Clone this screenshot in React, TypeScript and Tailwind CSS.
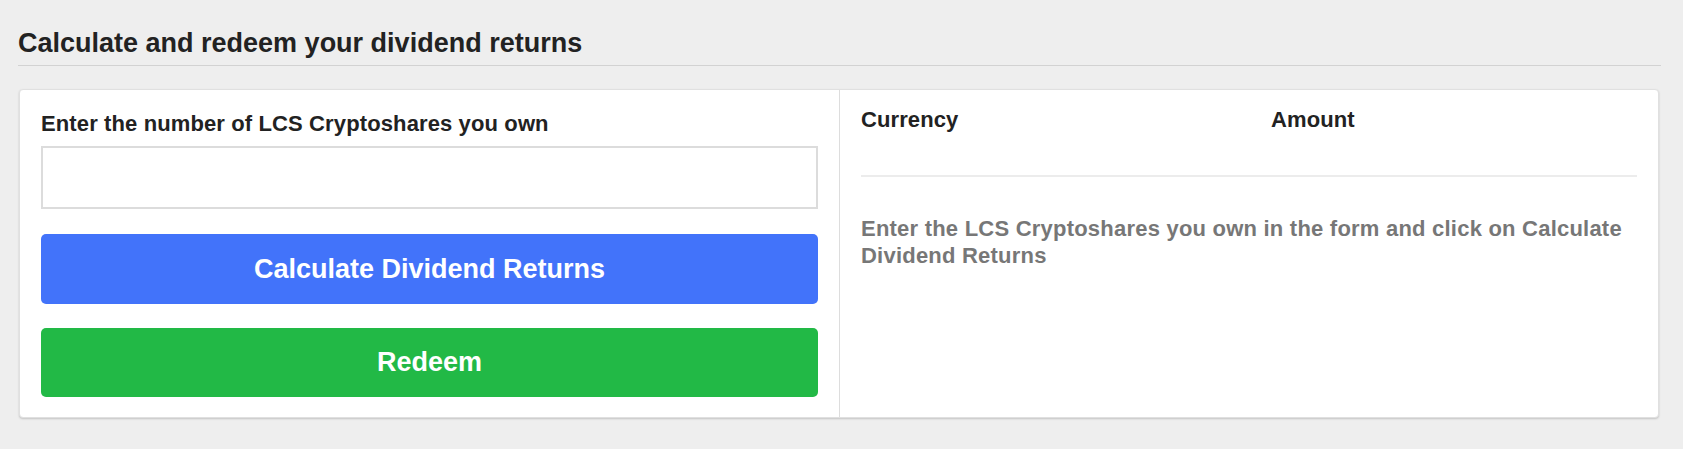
import { useState } from 'react'

export default function App() {
  const [shares, setShares] = useState('')

  return (
    <div className="min-h-screen bg-[#eeeeee] pl-[18px] pr-[22px] pt-[28px] font-['Liberation_Sans',Arial,sans-serif]">
      <h2 className="text-[27px] font-bold leading-[31px] text-[#222222] pb-[6px] border-b border-[#d2d2d2]">
        Calculate and redeem your dividend returns
      </h2>

      <div className="mt-[23px] ml-px mr-[2px] grid grid-cols-[820px_1fr] rounded bg-white border border-[#e0e0e0] shadow-[0_1px_2px_rgba(0,0,0,0.18)]">
        {/* Form */}
        <div className="border-r border-[#dddddd] px-[21px] pt-[21px] pb-[20px]">
          <label className="block text-[22px] leading-[25px] font-bold tracking-[0.12px] text-[#222222]">
            Enter the number of LCS Cryptoshares you own
          </label>
          <input
            value={shares}
            onChange={e => setShares(e.target.value)}
            className="mt-[10px] block h-[63px] w-full border-2 border-[#dcdcdc] bg-white px-3 text-[22px] outline-none"
          />
          <button className="mt-[25px] block h-[70px] w-full rounded-[5px] bg-[#4273fa] text-[27px] font-bold text-white">
            Calculate Dividend Returns
          </button>
          <button className="mt-[24px] block h-[69px] w-full rounded-[5px] bg-[#22b946] text-[27px] font-bold text-white">
            Redeem
          </button>
        </div>

        {/* Results */}
        <div className="px-[21px] pt-[17px]">
          <div className="grid grid-cols-[410px_1fr] pb-[43px] border-b-2 border-[#ececec] text-[22px] leading-[25px] font-bold tracking-[0.1px] text-[#222222]">
            <span>Currency</span>
            <span>Amount</span>
          </div>
          <p className="mt-[38px] text-[22px] leading-[27px] font-bold tracking-[0.22px] text-[#777777]">
            Enter the LCS Cryptoshares you own in the form and click on Calculate Dividend Returns
          </p>
        </div>
      </div>
    </div>
  )
}
